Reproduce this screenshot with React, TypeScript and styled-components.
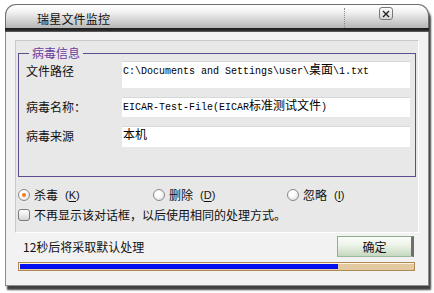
import styled, { createGlobalStyle } from "styled-components";

const GlobalStyle = createGlobalStyle`
  body {
    margin: 0;
    background: #ffffff;
    font-family: "Noto Sans CJK SC", "Liberation Sans", sans-serif;
  }
`;

const Screen = styled.div`
  width: 434px;
  height: 293px;
  padding: 4px 0 0 5px;
  box-sizing: border-box;
  overflow: hidden;
`;

const Window = styled.div`
  width: 424px;
  height: 282px;
  display: flex;
  flex-direction: column;
  border-radius: 11px 11px 0 0;
  box-shadow: 2px 4px 2px rgba(0, 0, 0, 0.75);
`;

const TitleBar = styled.div`
  height: 24px;
  display: flex;
  align-items: center;
  border: 1px solid #6e6e6e;
  border-bottom: none;
  border-radius: 11px 11px 0 0;
  background: linear-gradient(#ffffff 0%, #f2f2f2 30%, #b6b6b6 100%);
  box-sizing: border-box;
`;

const Title = styled.div`
  flex: 1;
  padding: 4px 0 0 31px;
  font-size: 12px;
  color: #111;
  letter-spacing: 0.2px;
`;

const TitleTools = styled.div`
  width: 84px;
  align-self: stretch;
  margin-top: 3px;
  border-left: 1px dotted #8a8a8a;
  display: flex;
  align-items: flex-start;
  padding-left: 34px;
  box-sizing: border-box;
`;

const CloseButton = styled.div`
  width: 14px;
  height: 13px;
  margin-top: -1px;
  border: 1px solid #777;
  border-radius: 3px;
  background: linear-gradient(#fbfbfb, #d6d6d6);
  display: flex;
  align-items: center;
  justify-content: center;
  box-sizing: border-box;
`;

const DarkBar = styled.div`
  height: 4px;
  background: linear-gradient(#1c1c1c, #2a2a2a 60%, #6a6a6a);
`;

const Body = styled.div`
  flex: 1;
  display: flex;
  flex-direction: column;
  background: #f2f2f2;
  border: 1px solid #8c8c8c;
  border-top: none;
  padding-top: 8px;
`;

const Panel = styled.div`
  margin: 0 9px;
  height: 193px;
  background: #e8e8e8;
  border-top: 1px solid #c9c9c9;
  border-left: 1px solid #c9c9c9;
  border-right: 1px solid #ffffff;
  border-bottom: 1px solid #ffffff;
  padding: 0 2px;
  box-sizing: border-box;
  display: flex;
  flex-direction: column;
`;

const GroupBox = styled.fieldset`
  margin: 5px 0 0;
  padding: 1px 5px 29px 7px;
  border: 1px solid #5f4b8f;
  display: flex;
  flex-direction: column;
  gap: 9px;
`;

const Legend = styled.legend`
  margin-left: 3px;
  padding: 0 3px;
  font-size: 12px;
  line-height: 14px;
  color: #6a3e9e;
`;

const FieldRow = styled.div`
  display: flex;
  align-items: flex-start;
`;

const FieldLabel = styled.div`
  width: 96px;
  font-size: 12px;
  line-height: 20px;
  color: #111;
`;

const FieldValue = styled.div<{ $h: number }>`
  flex: 1;
  height: ${(p) => p.$h}px;
  background: #ffffff;
  border-top: 1px solid #d8d8d8;
  box-sizing: border-box;
  padding: 1px 0 0 1px;
  font-family: "Liberation Mono", "Noto Sans CJK SC", monospace;
  font-size: 10px;
  line-height: 12px;
  color: #000;
  white-space: nowrap;
`;

const Cjk = styled.span`
  font-family: "Noto Sans CJK SC", sans-serif;
  font-size: 12px;
`;

const OptionRow = styled.div`
  display: grid;
  grid-template-columns: 135px 134px 1fr;
  margin-top: 9px;
  height: 14px;
  align-items: center;
`;

const Option = styled.label`
  display: flex;
  align-items: center;
  gap: 4px;
  font-size: 12px;
  color: #111;
`;

const Radio = styled.span<{ $checked?: boolean }>`
  width: 12px;
  height: 12px;
  border-radius: 50%;
  border: 1px solid #8a8a8a;
  background: radial-gradient(circle at 40% 35%, #ffffff 30%, #d4d4d4 100%);
  box-sizing: border-box;
  display: flex;
  align-items: center;
  justify-content: center;

  &::after {
    content: "";
    width: 4px;
    height: 4px;
    border-radius: 50%;
    background: ${(p) => (p.$checked ? "#f07a18" : "transparent")};
  }
`;

const Key = styled.span`
  font-family: "Liberation Sans", sans-serif;
  font-size: 11px;
  margin-left: 3px;

  u {
    text-underline-offset: 2px;
  }
`;

const CheckRow = styled.label`
  display: flex;
  align-items: center;
  gap: 4px;
  margin-top: 6px;
  font-size: 12px;
  color: #111;
`;

const CheckBox = styled.span`
  width: 12px;
  height: 12px;
  border: 1px solid #7a7a7a;
  border-radius: 3px;
  background: linear-gradient(#ffffff, #d6d6d6);
  box-sizing: border-box;
`;

const Footer = styled.div`
  flex: 1;
  display: flex;
  flex-direction: column;
  padding: 3px 13px 0 12px;
`;

const FooterRow = styled.div`
  display: flex;
  align-items: center;
  justify-content: space-between;
  height: 21px;
`;

const Countdown = styled.div`
  padding-left: 5px;
  font-size: 12px;
  color: #111;
`;

const OkButton = styled.button`
  width: 77px;
  height: 21px;
  margin-right: 1px;
  padding: 0;
  border: 1px solid #8fae8f;
  border-right: 3px solid #6f6f6f;
  border-bottom: 1px solid #9db89d;
  background: linear-gradient(#fbfdf9, #eef4ea 40%, #c6d8c0);
  font-family: "Noto Sans CJK SC", sans-serif;
  font-size: 12px;
  color: #111;
`;

const Progress = styled.div`
  margin-top: 5px;
  height: 9px;
  border: 1px solid #b08a55;
  background: #e2c9a0;
  padding: 1px;
  box-sizing: border-box;
  box-shadow: inset 1px 1px 0 #fff4dc;
`;

const ProgressFill = styled.div`
  height: 100%;
  background: #0010f0;
`;

export default function App() {
  const percent = 81;

  return (
    <>
      <GlobalStyle />
      <Screen>
        <Window>
          <TitleBar>
            <Title>瑞星文件监控</Title>
            <TitleTools>
              <CloseButton>
                <svg width="8" height="8" viewBox="0 0 8 8">
                  <path d="M1 1L7 7M7 1L1 7" stroke="#222" strokeWidth="1.4" />
                </svg>
              </CloseButton>
            </TitleTools>
          </TitleBar>
          <DarkBar />
          <Body>
            <Panel>
              <GroupBox>
                <Legend>病毒信息</Legend>
                <FieldRow>
                  <FieldLabel>文件路径</FieldLabel>
                  <FieldValue $h={27}>
                    C:\Documents and Settings\user\<Cjk>桌面</Cjk>\1.txt
                  </FieldValue>
                </FieldRow>
                <FieldRow>
                  <FieldLabel>病毒名称：</FieldLabel>
                  <FieldValue $h={20}>
                    EICAR-Test-File(EICAR<Cjk>标准测试文件</Cjk>)
                  </FieldValue>
                </FieldRow>
                <FieldRow>
                  <FieldLabel>病毒来源</FieldLabel>
                  <FieldValue $h={21}>
                    <Cjk>本机</Cjk>
                  </FieldValue>
                </FieldRow>
              </GroupBox>
              <OptionRow>
                <Option>
                  <Radio $checked />
                  杀毒<Key>(<u>K</u>)</Key>
                </Option>
                <Option>
                  <Radio />
                  删除<Key>(<u>D</u>)</Key>
                </Option>
                <Option>
                  <Radio />
                  忽略<Key>(<u>I</u>)</Key>
                </Option>
              </OptionRow>
              <CheckRow>
                <CheckBox />
                不再显示该对话框，以后使用相同的处理方式。
              </CheckRow>
            </Panel>
            <Footer>
              <FooterRow>
                <Countdown>12秒后将采取默认处理</Countdown>
                <OkButton>确定</OkButton>
              </FooterRow>
              <Progress>
                <ProgressFill style={{ width: `${percent}%` }} />
              </Progress>
            </Footer>
          </Body>
        </Window>
      </Screen>
    </>
  );
}
